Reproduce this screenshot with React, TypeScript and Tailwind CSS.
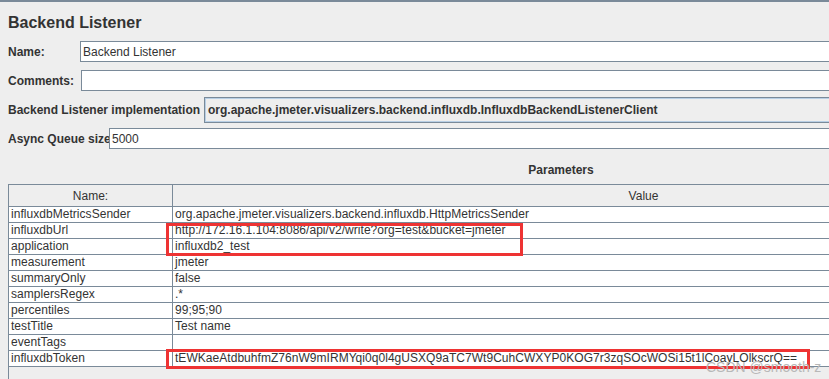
const params: [string, string][] = [
  ["influxdbMetricsSender", "org.apache.jmeter.visualizers.backend.influxdb.HttpMetricsSender"],
  ["influxdbUrl", "http://172.16.1.104:8086/api/v2/write?org=test&bucket=jmeter"],
  ["application", "influxdb2_test"],
  ["measurement", "jmeter"],
  ["summaryOnly", "false"],
  ["samplersRegex", ".*"],
  ["percentiles", "99;95;90"],
  ["testTitle", "Test name"],
  ["eventTags", ""],
  [
    "influxdbToken",
    "tEWKaeAtdbuhfmZ76nW9mIRMYqi0q0l4gUSXQ9aTC7Wt9CuhCWXYP0KOG7r3zqSOcWOSi15t1lCoayLOlkscrQ==",
  ],
];

const FieldRow = ({
  label,
  labelWidth,
  value,
  className,
}: {
  label: string;
  labelWidth: string;
  value?: string;
  className?: string;
}) => (
  <div className={`flex items-stretch h-[21px] ${className ?? ""}`}>
    <div className={`${labelWidth} shrink-0 pl-2 flex items-center font-bold text-[12px] whitespace-nowrap`}>
      {label}
    </div>
    <div className="flex-1 bg-white border-y border-l border-[#7a8a99] flex items-center pl-[2px] text-[12px]">
      {value}
    </div>
  </div>
);

export default function App() {
  return (
    <div className="relative w-[829px] h-[379px] overflow-hidden bg-[#eeeeee] border-t-2 border-[#7a8a99] text-[#333333] font-['Liberation_Sans',Arial,sans-serif]">
      {/* Title */}
      <div className="h-[39px] pl-2 pt-[11px] text-[16px] leading-[20px] font-bold">Backend Listener</div>

      <FieldRow label="Name:" labelWidth="w-[80px]" value="Backend Listener" />
      <FieldRow label="Comments:" labelWidth="w-[81px]" className="mt-[8px]" />

      {/* Implementation combo */}
      <div className="flex items-stretch h-[26px] mt-[6px]">
        <div className="w-[204px] shrink-0 pl-2 flex items-center font-bold text-[12px] whitespace-nowrap">
          Backend Listener implementation
        </div>
        <div className="flex-1 bg-[#eeeeee] border border-r-0 border-[#7a8a99] flex items-center">
          <div className="flex-1 h-full border border-r-0 border-[#b8cfe5] flex items-center pl-[2px] font-bold text-[12px] whitespace-nowrap">
            org.apache.jmeter.visualizers.backend.influxdb.InfluxdbBackendListenerClient
          </div>
        </div>
      </div>

      <FieldRow label="Async Queue size" labelWidth="w-[109px]" value="5000" className="mt-[5px]" />

      {/* Parameters */}
      <div className="w-[1106px] ml-2">
        <div className="h-[35px] flex items-center justify-center pt-[7px] font-bold text-[12px]">Parameters</div>
        <div className="border-l border-t border-[#7a8a99]">
          <div className="flex h-[22px] border-b border-[#7a8a99] text-[12px]">
            <div className="w-[164px] border-r border-[#7a8a99] flex items-center justify-center">Name:</div>
            <div className="flex-1 flex items-center justify-center">Value</div>
          </div>
          {params.map(([name, value]) => (
            <div
              key={name}
              className="flex h-[16px] bg-white border-b border-[#7a8a99] text-[12px] leading-[15px] tracking-[0.04px]"
            >
              <div className="w-[164px] border-r border-[#7a8a99] pl-[2px] whitespace-nowrap">{name}</div>
              <div className="flex-1 pl-[2px] whitespace-nowrap">{value}</div>
            </div>
          ))}
          <div className="h-[20px]" />
        </div>
      </div>

      {/* Annotations */}
      <div className="absolute left-[166px] top-[221px] w-[357px] h-[33px] border-[3px] border-[#ee3333]" />
      <div className="absolute left-[166px] top-[347px] w-[644px] h-[20px] border-[3px] border-[#ee3333]" />
      <div className="absolute left-[706px] top-[357px] text-[14px] leading-[16px] text-[#b8b8b8] whitespace-nowrap">
        CSDN @smooth-z
      </div>
    </div>
  );
}
